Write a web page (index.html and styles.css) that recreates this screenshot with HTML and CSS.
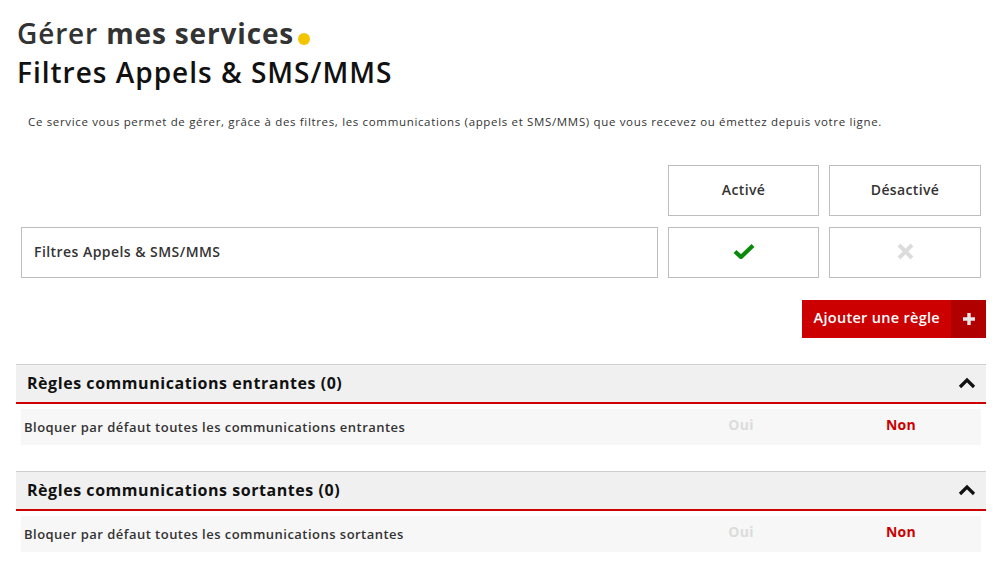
FILE: index.html
```html
<!DOCTYPE html>
<html lang="fr">
<head>
<meta charset="utf-8">
<title>Filtres Appels &amp; SMS/MMS</title>
<link rel="stylesheet" href="styles.css">
</head>
<body>
<main class="page">
  <h1 class="title"><span class="title-light">Gérer</span> mes services<span class="dot"></span></h1>
  <h2 class="subtitle">Filtres Appels &amp; SMS/MMS</h2>
  <p class="desc">Ce service vous permet de gérer, grâce à des filtres, les communications (appels et SMS/MMS) que vous recevez ou émettez depuis votre ligne.</p>

  <div class="status-grid">
    <div class="cell-empty"></div>
    <div class="cell head">Activé</div>
    <div class="cell head">Désactivé</div>
    <div class="cell name">Filtres Appels &amp; SMS/MMS</div>
    <div class="cell">
      <svg class="icon" width="22" height="16" viewBox="0 0 22 16"><path d="M2 8.5 L8 14 L20 2.5" fill="none" stroke="#0a8a0a" stroke-width="4.2" stroke-linejoin="miter"/></svg>
    </div>
    <div class="cell">
      <svg class="icon" width="17" height="17" viewBox="0 0 17 17"><path d="M2 2 L15 15 M15 2 L2 15" fill="none" stroke="#dcdcdc" stroke-width="4"/></svg>
    </div>
  </div>

  <div class="actions">
    <button class="btn-add"><span class="btn-label">Ajouter une règle</span><span class="btn-plus"><svg width="14" height="14" viewBox="0 0 14 14"><path d="M7 1 V13 M1 7 H13" stroke="#e8e8e8" stroke-width="3.4"/></svg></span></button>
  </div>

  <section class="rules">
    <div class="rules-head">
      <h3 class="rules-title">Règles communications entrantes (0)</h3>
      <svg class="chev" width="18" height="12" viewBox="0 0 18 12"><path d="M2 10 L9 3 L16 10" fill="none" stroke="#111" stroke-width="3.2"/></svg>
    </div>
    <div class="rule-row">
      <span class="rule-label">Bloquer par défaut toutes les communications entrantes</span>
      <span class="opt opt-off">Oui</span>
      <span class="opt opt-on">Non</span>
    </div>
  </section>

  <section class="rules">
    <div class="rules-head">
      <h3 class="rules-title">Règles communications sortantes (0)</h3>
      <svg class="chev" width="18" height="12" viewBox="0 0 18 12"><path d="M2 10 L9 3 L16 10" fill="none" stroke="#111" stroke-width="3.2"/></svg>
    </div>
    <div class="rule-row">
      <span class="rule-label">Bloquer par défaut toutes les communications sortantes</span>
      <span class="opt opt-off">Oui</span>
      <span class="opt opt-on">Non</span>
    </div>
  </section>
</main>
</body>
</html>
```

FILE: styles.css
```css
* { box-sizing: border-box; }
html, body { margin: 0; padding: 0; background: #fff; }
body {
  font-family: "Open Sans", "DejaVu Sans", sans-serif;
  color: #333;
}
.page {
  width: 970px;
  margin-left: 16px;
  padding-top: 14px;
}
.title {
  margin: 0 0 0 1px;
  font-size: 28px;
  line-height: 38px;
  font-weight: 700;
  color: #333;
  letter-spacing: 0.85px;
}
.title-light { font-weight: 600; }
.dot {
  display: inline-block;
  width: 12px;
  height: 12px;
  border-radius: 50%;
  background: #f2c500;
  margin-left: 4px;
  vertical-align: baseline;
  position: relative;
  top: 1px;
}
.subtitle {
  margin: 0 0 0 1px;
  font-size: 28px;
  line-height: 40px;
  font-weight: 600;
  color: #111;
  letter-spacing: 1px;
}
.desc {
  margin: 22px 0 0 12px;
  font-size: 11.5px;
  line-height: 16px;
  color: #333;
  letter-spacing: 0.66px;
}
.status-grid {
  display: grid;
  grid-template-columns: 637px 151px 152px;
  grid-auto-rows: 51px;
  column-gap: 10px;
  row-gap: 11px;
  margin: 35px 0 0 5px;
}
.cell {
  border: 1px solid #bdbdbd;
  display: flex;
  align-items: center;
  justify-content: center;
  padding-bottom: 3px;
  font-size: 14px;
  font-weight: 600;
  color: #333;
  letter-spacing: 0.35px;
}
.cell.name {
  justify-content: flex-start;
  padding-left: 12px;
  letter-spacing: 0.45px;
}
.icon { display: block; }
.actions {
  display: flex;
  justify-content: flex-end;
  margin-top: 22px;
}
.btn-add {
  display: flex;
  align-items: stretch;
  height: 38px;
  padding: 0;
  border: 0;
  background: #cc0000;
  color: #fff;
  font-family: inherit;
  font-size: 14.5px;
  font-weight: 600;
  letter-spacing: 0.3px;
  cursor: pointer;
}
.btn-label {
  display: flex;
  align-items: center;
  padding: 0 11px 3px 12px;
}
.btn-plus {
  display: flex;
  align-items: center;
  justify-content: center;
  width: 35px;
  background: #b00000;
}
.rules {
  margin-top: 26px;
}
.rules-head {
  display: flex;
  align-items: center;
  justify-content: space-between;
  height: 40px;
  background: #f0f0f0;
  border-top: 1px solid #cfcfcf;
  border-bottom: 2px solid #cc0000;
  padding: 0 10px 1px 11px;
}
.rules-title {
  margin: 0;
  font-size: 16px;
  font-weight: 700;
  color: #111;
  letter-spacing: 0.55px;
}
.chev { display: block; }
.rule-row {
  display: grid;
  grid-template-columns: 1fr 150px 150px;
  column-gap: 10px;
  align-items: center;
  height: 36px;
  margin: 5px 5px 0 5px;
  background: #f7f7f7;
  padding: 0 5px 1px 3px;
}
.rule-label {
  font-size: 13px;
  font-weight: 600;
  color: #333;
  letter-spacing: 0.47px;
}
.opt {
  text-align: center;
  font-size: 14px;
  font-weight: 700;
  letter-spacing: 0.3px;
  padding-bottom: 4px;
}
.opt-off { color: #dcdcdc; }
.opt-on { color: #cc0000; }
```
